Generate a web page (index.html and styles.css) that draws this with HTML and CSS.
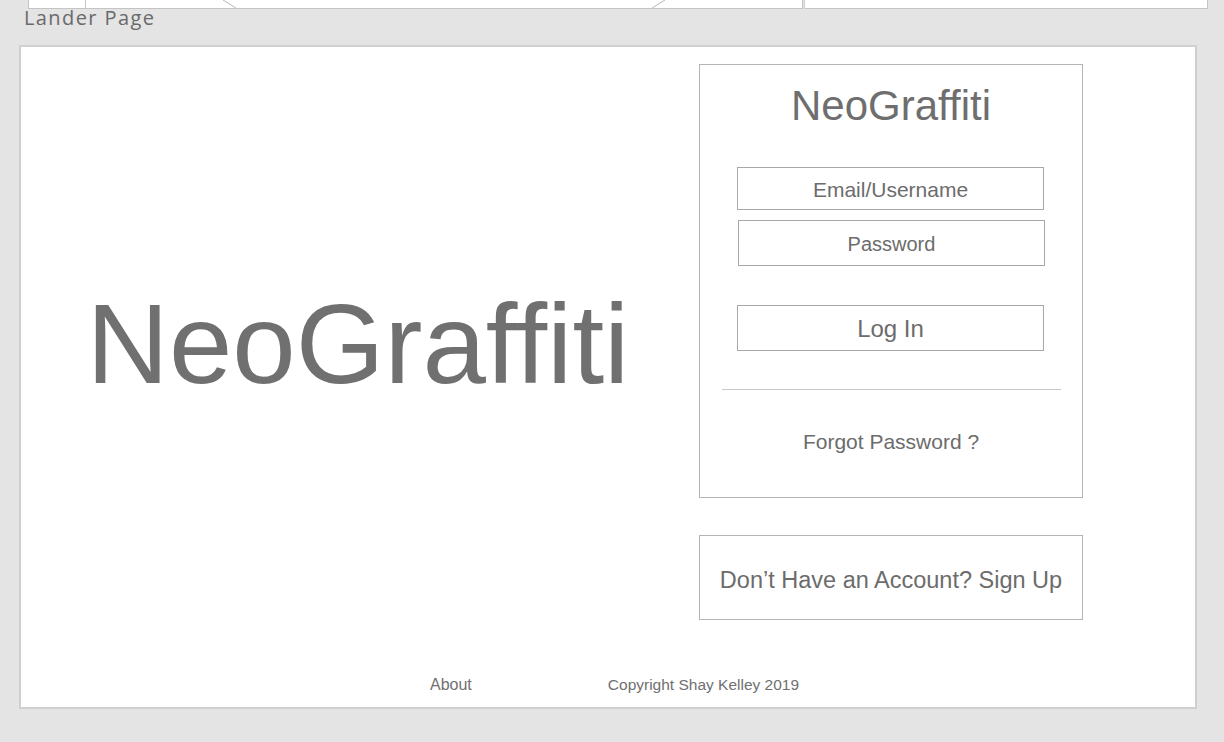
FILE: index.html
```html
<!DOCTYPE html>
<html lang="en">
<head>
<meta charset="utf-8">
<title>Lander Page</title>
<link rel="stylesheet" href="styles.css">
</head>
<body>
<div class="topstrip">
  <div class="peek peek-left">
    <svg class="peek-lines" width="774" height="8" viewBox="0 0 774 8">
      <line x1="56.5" y1="0" x2="56.5" y2="8" stroke="#c8c8c8" stroke-width="1"/>
      <line x1="194" y1="0" x2="207" y2="8" stroke="#b8b8b8" stroke-width="1"/>
      <line x1="636" y1="0" x2="623" y2="8" stroke="#b8b8b8" stroke-width="1"/>
    </svg>
  </div>
  <div class="peek peek-right"></div>
</div>
<div class="label">Lander Page</div>
<div class="frame">
  <div class="content">
    <div class="hero">
      <h1 class="hero-title">NeoGraffiti</h1>
    </div>
    <div class="side">
      <div class="card login">
        <div class="card-title">NeoGraffiti</div>
        <div class="field field-email">Email/Username</div>
        <div class="field field-pass">Password</div>
        <div class="field btn">Log In</div>
        <div class="divider"></div>
        <div class="forgot">Forgot Password ?</div>
      </div>
      <div class="card signup">Don’t Have an Account? Sign Up</div>
    </div>
  </div>
  <div class="footer">
    <span class="about">About</span>
    <span class="copy">Copyright Shay Kelley 2019</span>
  </div>
</div>
</body>
</html>
```

FILE: styles.css
```css
* { box-sizing: border-box; }

html, body {
  margin: 0;
  padding: 0;
}

body {
  background: #e4e4e4;
  font-family: "Liberation Sans", Arial, sans-serif;
  color: #6f6f6f;
  width: 1224px;
  height: 742px;
  overflow: hidden;
}

.topstrip {
  display: flex;
  height: 9px;
  padding-left: 28px;
}

.peek {
  height: 9px;
  background: #fff;
  border: 1px solid #c4c4c4;
  border-top: none;
}

.peek-left {
  width: 775px;
  position: relative;
}

.peek-lines {
  display: block;
}

.peek-right {
  width: 404px;
  margin-left: 1px;
  border-left-color: #d0d0d0;
}

.label {
  font-family: "Open Sans", "Liberation Sans", sans-serif;
  font-size: 20px;
  line-height: 16px;
  letter-spacing: 1.4px;
  color: #6a6a6a;
  padding-left: 24px;
  padding-top: 1px;
  height: 36px;
}

.frame {
  margin-left: 19px;
  width: 1178px;
  height: 664px;
  background: #fff;
  border: 2px solid #d0d0d0;
  display: flex;
  flex-direction: column;
}

.content {
  display: flex;
  align-items: flex-start;
}

.hero {
  width: 678px;
  display: flex;
  justify-content: center;
  padding-top: 240px;
  padding-right: 4px;
}

.hero-title {
  margin: 0;
  font-weight: normal;
  font-size: 114px;
  line-height: 114px;
  color: #707070;
}

.side {
  width: 384px;
  padding-top: 17px;
  display: flex;
  flex-direction: column;
  gap: 37px;
}

.card {
  border: 1px solid #b4b4b4;
  background: #fff;
}

.login {
  height: 434px;
  display: flex;
  flex-direction: column;
  align-items: center;
  padding-top: 17px;
}

.card-title {
  font-size: 42px;
  line-height: 48px;
  color: #6e6e6e;
  margin-bottom: 37px;
}

.field {
  width: 307px;
  border: 1px solid #a8a8a8;
  display: flex;
  align-items: center;
  justify-content: center;
  color: #6c6c6c;
  padding-top: 2px;
}

.field-email {
  height: 43px;
  font-size: 21px;
  margin-right: 1px;
}

.field-pass {
  height: 46px;
  margin-top: 10px;
  font-size: 20px;
  margin-left: 1px;
}

.btn {
  height: 46px;
  margin-top: 39px;
  font-size: 24px;
  margin-right: 1px;
}

.divider {
  width: 339px;
  height: 1px;
  background: #c8c8c8;
  margin-top: 38px;
}

.forgot {
  margin-top: 40px;
  font-size: 21px;
  line-height: 24px;
  color: #6c6c6c;
}

.signup {
  height: 85px;
  display: flex;
  align-items: center;
  justify-content: center;
  font-size: 23.5px;
  padding-top: 6px;
  color: #6c6c6c;
}

.footer {
  margin-top: 56px;
  display: flex;
  align-items: baseline;
  padding-left: 409px;
  font-size: 16px;
  line-height: 18px;
  color: #707070;
}

.copy {
  margin-left: 136px;
  font-size: 15.5px;
}
```
